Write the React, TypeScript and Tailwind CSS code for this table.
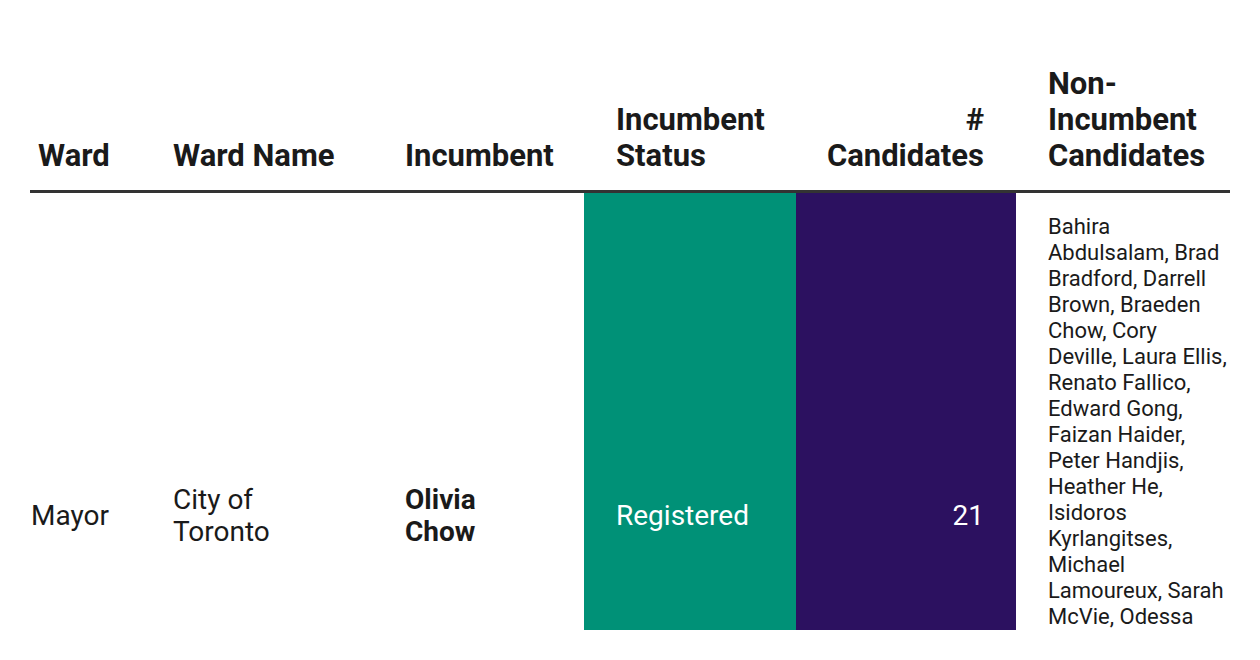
const candidates =
  "Bahira Abdulsalam, Brad Bradford, Darrell Brown, Braeden Chow, Cory Deville, Laura Ellis, Renato Fallico, Edward Gong, Faizan Haider, Peter Handjis, Heather He, Isidoros Kyrlangitses, Michael Lamoureux, Sarah McVie, Odessa Orlando, Mark Saunders, Ali Shafiq, Anthony Stirpe, Kevin Vuong, Jennifer Wong, Thomas Zhang";

export default function App() {
  return (
    <div className="w-[1260px] h-[660px] bg-white font-['Roboto',sans-serif] text-[#1a1a1a]">
      <div className="h-[630px] overflow-hidden pt-[50px] px-[30px]">
        <table className="w-[1200px] table-fixed border-collapse">
          <colgroup>
            <col className="w-[111px]" />
            <col className="w-[232px]" />
            <col className="w-[211px]" />
            <col className="w-[212px]" />
            <col className="w-[220px]" />
            <col className="w-[214px]" />
          </colgroup>
          <thead>
            <tr className="border-b-[3px] border-[#333333] text-[31px] leading-[36px] font-bold text-left align-bottom">
              <th className="pl-2 pt-4 pb-4 font-bold">Ward</th>
              <th className="pl-8 pt-4 pb-4 font-bold">Ward Name</th>
              <th className="pl-8 pt-4 pb-4 font-bold">Incumbent</th>
              <th className="pl-8 pt-4 pb-4 font-bold">
                Incumbent
                <br />
                Status
              </th>
              <th className="pr-8 pt-4 pb-4 font-bold text-right">
                #
                <br />
                Candidates
              </th>
              <th className="pl-8 pt-4 pb-4 font-bold">
                Non-
                <br />
                Incumbent
                <br />
                Candidates
              </th>
            </tr>
          </thead>
          <tbody>
            <tr className="h-[648px] text-[28px] leading-[32px] align-middle">
              <td className="pl-[1px]">Mayor</td>
              <td className="pl-8 pr-6">City of Toronto</td>
              <td className="pl-8 pr-10 font-bold">Olivia Chow</td>
              <td className="pl-8 bg-[#009177] text-white">Registered</td>
              <td className="pr-8 bg-[#2c1160] text-white text-right">21</td>
              <td className="pl-8 align-top pt-[21px]">
                <div className="h-[598px] overflow-hidden text-[22px] leading-[26px]">
                  {candidates}
                </div>
              </td>
            </tr>
          </tbody>
        </table>
      </div>
    </div>
  );
}
